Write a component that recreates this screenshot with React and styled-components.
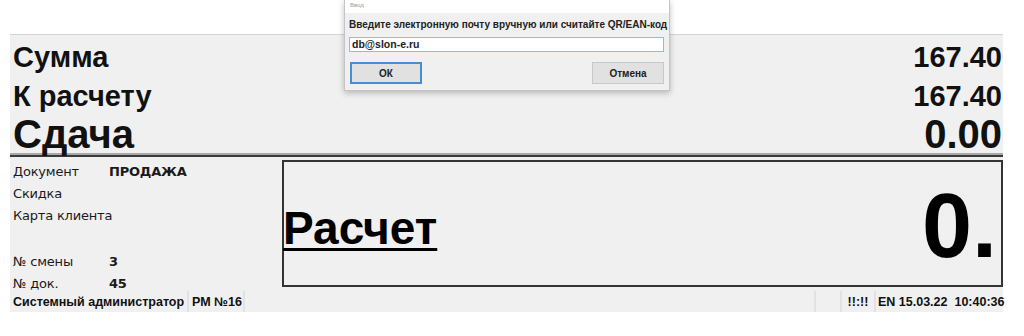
import React from "react";
import styled, { createGlobalStyle } from "styled-components";

const Global = createGlobalStyle`
  html, body { margin: 0; padding: 0; background: #ffffff; }
  body { font-family: "Liberation Sans", Arial, sans-serif; color: #000; }
  * { box-sizing: border-box; }
`;

const Page = styled.div`
  position: relative;
  width: 1024px;
  height: 336px;
  padding: 34px 0 0 10px;
`;

const Window = styled.div`
  width: 993px;
  background: #f0f0f0;
  border-top: 1px solid #d4d4d4;
`;

const Totals = styled.div`
  padding: 3px 1px 0 3px;
`;

const TotalRow = styled.div`
  display: flex;
  justify-content: space-between;
  align-items: center;
  height: ${(p) => p.$h}px;
  line-height: ${(p) => p.$h}px;
  font-weight: bold;
  font-size: ${(p) => p.$size}px;
  font-family: "Liberation Sans", Arial, sans-serif;
  color: #111;
`;

const Separator = styled.div`
  height: 4px;
  border-top: 2px solid #a8a8a8;
  border-bottom: 2px solid #3a3a3a;
`;

const Bottom = styled.div`
  display: flex;
  align-items: flex-start;
  height: 134px;
  padding-top: 3px;
`;

const Info = styled.div`
  width: 272px;
  padding: 1px 0 0 3px;
  font-family: "DejaVu Sans", Verdana, sans-serif;
  font-size: 13px;
  color: #1a1a1a;
`;

const InfoRow = styled.div`
  display: flex;
  height: 22px;
  line-height: 22px;
  white-space: nowrap;
`;

const InfoLabel = styled.span`
  width: 96px;
  letter-spacing: -0.2px;
`;

const InfoValue = styled.span`
  font-weight: bold;
  letter-spacing: -0.2px;
`;

const Spacer = styled.div`
  height: 24px;
`;

const Display = styled.div`
  flex: 1;
  height: 127px;
  border: 2px solid #333;
  display: flex;
  justify-content: space-between;
  align-items: center;
  padding-right: 4px;
`;

const Title = styled.span`
  font-family: "Liberation Sans", Arial, sans-serif;
  font-weight: bold;
  font-size: 46px;
  text-decoration: underline;
  text-decoration-thickness: 3px;
  text-underline-offset: 4px;
  margin: 8px 0 0 -1px;
  line-height: 52px;
`;

const Amount = styled.span`
  font-family: "Liberation Sans", Arial, sans-serif;
  font-weight: bold;
  font-size: 90px;
  line-height: 90px;
  align-self: flex-end;
  margin-bottom: 14px;
`;

const StatusBar = styled.div`
  display: flex;
  height: 21px;
  background: #f0f0f0;
  font-family: "Liberation Sans", Arial, sans-serif;
  font-weight: bold;
  font-size: 12.5px;
  color: #111;
`;

const Cell = styled.div`
  display: flex;
  align-items: center;
  padding: 0 ${(p) => p.$pad ?? 3}px;
  width: ${(p) => (p.$w ? `${p.$w}px` : "auto")};
  flex: ${(p) => (p.$grow ? 1 : "none")};
  border-right: ${(p) => (p.$last || p.$grow ? "none" : "2px solid #e2e2e2")};
  border-left: ${(p) => (p.$left ? "2px solid #e2e2e2" : "none")};
  white-space: pre;
  justify-content: ${(p) => (p.$center ? "center" : "flex-start")};
`;

const Dialog = styled.div`
  position: absolute;
  left: 344px;
  top: 0;
  width: 326px;
  height: 91px;
  background: #f0f0f0;
  border: 1px solid #c4c4c4;
  border-top: none;
  box-shadow: 0 2px 6px rgba(0, 0, 0, 0.25);
  font-family: "Liberation Sans", Arial, sans-serif;
`;

const DialogTitle = styled.div`
  height: 13px;
  background: #fff;
  font-size: 6px;
  line-height: 11px;
  color: #9a9a9a;
  padding-left: 5px;
`;

const DialogBody = styled.div`
  padding: 5px 5px 0 4px;
  display: flex;
  flex-direction: column;
`;

const Prompt = styled.div`
  font-size: 10px;
  font-weight: bold;
  color: #222;
  line-height: 14px;
  white-space: nowrap;
`;

const Input = styled.div`
  margin-top: 5px;
  height: 15px;
  background: #fff;
  border: 1px solid #8fbbe6;
  font-size: 10.5px;
  font-weight: bold;
  color: #222;
  line-height: 13px;
  padding-left: 2px;
`;

const Buttons = styled.div`
  display: flex;
  justify-content: space-between;
  margin-top: 10px;
  padding-left: 1px;
`;

const Button = styled.div`
  width: 72px;
  height: 22px;
  background: #e1e1e1;
  border: ${(p) => (p.$focus ? "2px solid #4a8cd0" : "1px solid #c8c8c8")};
  display: flex;
  align-items: center;
  justify-content: center;
  font-size: 10px;
  font-weight: bold;
  color: #222;
`;

export default function App() {
  return (
    <>
      <Global />
      <Page>
        <Window>
          <Totals>
            <TotalRow $h={39} $size={29}>
              <span>Сумма</span>
              <span>167.40</span>
            </TotalRow>
            <TotalRow $h={38} $size={29}>
              <span>К расчету</span>
              <span>167.40</span>
            </TotalRow>
            <TotalRow $h={38} $size={40}>
              <span>Сдача</span>
              <span>0.00</span>
            </TotalRow>
          </Totals>
          <Separator />
          <Bottom>
            <Info>
              <InfoRow>
                <InfoLabel>Документ</InfoLabel>
                <InfoValue>ПРОДАЖА</InfoValue>
              </InfoRow>
              <InfoRow>
                <InfoLabel>Скидка</InfoLabel>
              </InfoRow>
              <InfoRow>
                <InfoLabel>Карта клиента</InfoLabel>
              </InfoRow>
              <Spacer />
              <InfoRow>
                <InfoLabel>№ смены</InfoLabel>
                <InfoValue>3</InfoValue>
              </InfoRow>
              <InfoRow>
                <InfoLabel>№ док.</InfoLabel>
                <InfoValue>45</InfoValue>
              </InfoRow>
            </Info>
            <Display>
              <Title>Расчет</Title>
              <Amount>0.</Amount>
            </Display>
          </Bottom>
          <StatusBar>
            <Cell $w={179}>Системный администратор</Cell>
            <Cell $w={56}>РМ №16</Cell>
            <Cell $grow />
            <Cell $w={28} $left />
            <Cell $w={34} $center>!!:!!</Cell>
            <Cell $w={127} $pad={2} $last>EN 15.03.22  10:40:36</Cell>
          </StatusBar>
        </Window>
        <Dialog>
          <DialogTitle>Ввод</DialogTitle>
          <DialogBody>
            <Prompt>Введите электронную почту вручную или считайте QR/EAN-код</Prompt>
            <Input>db@slon-e.ru</Input>
            <Buttons>
              <Button $focus>ОК</Button>
              <Button>Отмена</Button>
            </Buttons>
          </DialogBody>
        </Dialog>
      </Page>
    </>
  );
}
